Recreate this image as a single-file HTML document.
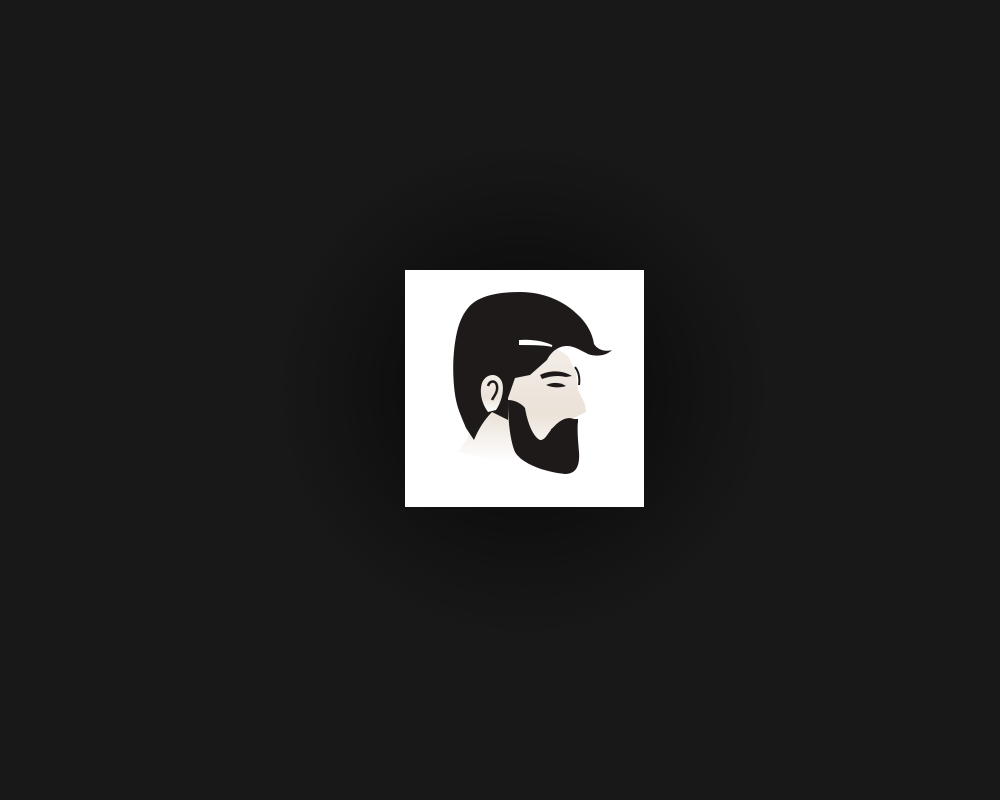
<!DOCTYPE html>
<html><head><style>
html,body{margin:0;padding:0;width:1000px;height:800px;overflow:hidden;background:#181818}
.bg{position:absolute;left:0;top:0;width:1000px;height:800px;background:radial-gradient(ellipse 250px 250px at 524px 390px,#0c0c0c 0%,#0e0e0e 45%,#141414 75%,#181818 100%)}
.box{position:absolute;left:405px;top:270px;width:239px;height:237px;background:#fff}
svg{position:absolute;left:0;top:0}
</style></head><body>
<div class="bg"></div>
<div class="box"></div>
<svg width="1000" height="800" viewBox="0 0 1000 800">
<defs><linearGradient id="sk" x1="0" y1="0" x2="0" y2="1"><stop offset="0" stop-color="#f4efe9"/><stop offset="0.6" stop-color="#ebe2d8"/><stop offset="1" stop-color="#fff"/></linearGradient></defs>
<!-- skin -->
<path d="M520 340 L553 346 L568 356 L576 372 L578 390 L585 404 L586 412 L574 418 L572 440 L540 460 L500 462 L458 452 L468 438 L472 410 L485 395 L505 370 Z" fill="url(#sk)"/>
<!-- hair -->
<path d="M468 308 C478 295 500 292 520 292 C545 292 565 302 578 315 C588 324 593 336 594 344 C598 350 605 352 612 350 C606 356 596 357 588 354 C580 350 574 346 567 346 C560 346 552 350 547 360 L530 375 L515 378 L508 398 L508 420 L492 412 C484 420 478 430 474 440 L466 428 C462 418 458 410 456 400 C452 380 452 350 458 328 C461 318 464 313 468 308 Z" fill="#1e1a1a"/>
<path d="M520 341 C530 340 543 342 552 346 C546 344 532 344 520 344 Z" fill="#fff" stroke="#fff" stroke-width="2"/>
<!-- ear -->
<path d="M482 383 C486 373 498 372 502 382 C505 392 500 404 496 410 L488 412 C482 404 479 393 482 383 Z" fill="url(#sk)"/>
<path d="M488 386 C490 380 496 380 497 386 C498 392 494 396 492 400" stroke="#1e1a1a" stroke-width="2.5" fill="none"/>
<!-- eyebrow & eye -->
<path d="M540 375 C550 370 562 370 572 376 L566 377 C558 375 550 376 542 379 Z" fill="#1e1a1a"/>
<path d="M546 385 C553 382 560 382 566 386 C560 388 553 388 546 385 Z" fill="#1e1a1a"/>
<path d="M575 367 C579 372 580 378 579 385" stroke="#1e1a1a" stroke-width="2" fill="none"/>
<!-- beard -->
<path d="M508 400 C508 420 510 440 515 452 C522 464 545 472 565 474 C576 474 580 466 579 452 C578 440 577 430 578 420 L570 418 C562 418 556 424 551 430 C546 436 545 440 540 440 C532 436 527 420 525 408 C520 402 513 400 508 400 Z" fill="#1e1a1a"/>
<path d="M552 431 C560 424 570 421 578 421" stroke="#1e1a1a" stroke-width="4" fill="none"/>
</svg>
</body></html>
